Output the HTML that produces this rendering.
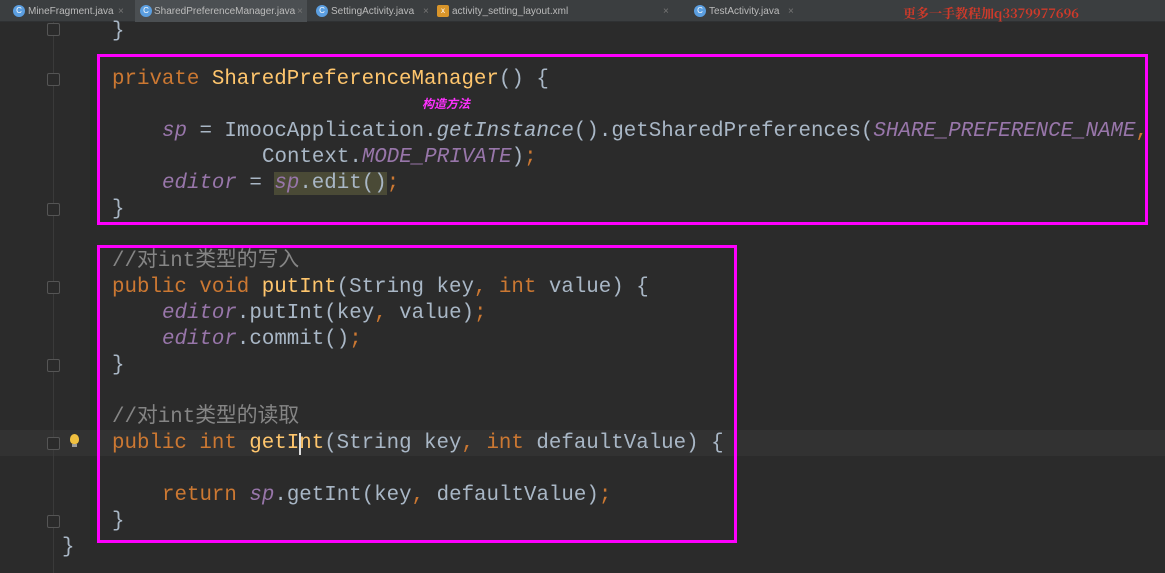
<!DOCTYPE html>
<html><head><meta charset="utf-8"><style>
*{margin:0;padding:0;box-sizing:border-box}
body{width:1165px;height:573px;overflow:hidden;background:#2b2b2b;position:relative;font-family:"Liberation Mono","Noto Sans CJK SC",monospace}
.tabs{position:absolute;left:0;top:0;width:1165px;height:22px;background:#3b3e40;border-bottom:1px solid #2f3133;font-family:"Liberation Sans",sans-serif;font-size:10px;color:#bbbbbb}
.tab{position:absolute;top:0;height:22px}
.tab.act{background:#4b4f52}
.t{position:absolute;top:1px;line-height:22px;white-space:nowrap}
.ic{position:absolute;top:5px;width:12px;height:12px;border-radius:50%;background:#5b9ee0;color:#fff;font-size:8px;line-height:12px;text-align:center;font-family:"Liberation Sans",sans-serif}
.x{position:absolute;top:1px;line-height:22px;color:#777;font-size:10px;font-family:"Liberation Sans",sans-serif}
.wm{position:absolute;left:903px;top:6px;font-family:"Noto Serif CJK SC",serif;font-size:13px;color:#d03a2a;font-weight:bold;line-height:14px}
.fl{position:absolute;left:53px;top:22px;width:1px;height:551px;background:#3a3a3a}
.fold{position:absolute;left:47px;width:13px;height:13px;border:1px solid #555;border-radius:2px;background:#2b2b2b}
.l{position:absolute;height:26px;line-height:26px;font-size:20.8px;color:#a9b7c6;white-space:pre}
.k{color:#cc7832}.m{color:#ffc66d}.p{color:#9876aa;font-style:italic}.c{color:#858585}
.box{position:absolute;border:3px solid #ff00ff}
.cur{position:absolute;left:0;top:430px;width:1165px;height:26px;background:#323232}
</style></head><body>
<div class="tabs">
<div class="tab act" style="left:135px;width:172px"></div>
<span class="ic" style="left:13px">C</span><span class="t" style="left:28px">MineFragment.java</span><span class="x" style="left:118px">×</span>
<span class="ic" style="left:140px">C</span><span class="t" style="left:154px">SharedPreferenceManager.java</span><span class="x" style="left:297px">×</span>
<span class="ic" style="left:316px">C</span><span class="t" style="left:331px">SettingActivity.java</span><span class="x" style="left:423px">×</span>
<span class="ic" style="left:437px;border-radius:2px;background:#d9952a">x</span><span class="t" style="left:452px">activity_setting_layout.xml</span><span class="x" style="left:663px">×</span>
<span class="ic" style="left:694px">C</span><span class="t" style="left:709px">TestActivity.java</span><span class="x" style="left:788px">×</span>
</div>
<div class="wm">更多一手教程加q3379977696</div>
<div class="cur"></div>
<div class="fl"></div>
<div class="fold" style="top:23px"></div>
<div class="fold" style="top:73px"></div>
<div class="fold" style="top:203px"></div>
<div class="fold" style="top:281px"></div>
<div class="fold" style="top:359px"></div>
<div class="fold" style="top:437px"></div>
<div class="fold" style="top:515px"></div>
<div style="position:absolute;left:70px;top:434px;width:9px;height:10px;border-radius:50% 50% 40% 40%;background:#f0c040"></div>
<div style="position:absolute;left:72px;top:444px;width:5px;height:3px;background:#999"></div>

<div class="l" style="left:112px;top:19px">}</div>
<div class="l" style="left:112px;top:67px"><span class="k">private </span><span class="m">SharedPreferenceManager</span>() {</div>
<div style="position:absolute;left:422px;top:95px;font-family:'Noto Sans CJK SC',sans-serif;font-style:italic;font-size:12px;color:#ff30ff;font-weight:bold">构造方法</div>
<div class="l" style="left:162px;top:119px"><span class="p">sp</span> = ImoocApplication.<span style="font-style:italic">getInstance</span>().getSharedPreferences(<span class="p">SHARE_PREFERENCE_NAME</span><span class="k">,</span></div>
<div class="l" style="left:262px;top:145px">Context.<span class="p">MODE_PRIVATE</span>)<span class="k">;</span></div>
<div class="l" style="left:162px;top:171px"><span class="p">editor</span> = <span style="background:#4a4a36"><span class="p">sp</span>.edit()</span><span class="k">;</span></div>
<div class="l" style="left:112px;top:197px">}</div>

<div class="l c" style="left:112px;top:249px">//对int类型的写入</div>
<div class="l" style="left:112px;top:275px"><span class="k">public void </span><span class="m">putInt</span>(String key<span class="k">, int </span>value) {</div>
<div class="l" style="left:162px;top:301px"><span class="p">editor</span>.putInt(key<span class="k">, </span>value)<span class="k">;</span></div>
<div class="l" style="left:162px;top:327px"><span class="p">editor</span>.commit()<span class="k">;</span></div>
<div class="l" style="left:112px;top:353px">}</div>
<div class="l c" style="left:112px;top:405px">//对int类型的读取</div>
<div class="l" style="left:112px;top:431px"><span class="k">public int </span><span class="m">getInt</span>(String key<span class="k">, int </span>defaultValue) {</div>
<div style="position:absolute;left:299px;top:433px;width:2px;height:22px;background:#ddd"></div>
<div class="l" style="left:162px;top:483px"><span class="k">return </span><span class="p">sp</span>.getInt(key<span class="k">, </span>defaultValue)<span class="k">;</span></div>
<div class="l" style="left:112px;top:509px">}</div>
<div class="l" style="left:62px;top:535px">}</div>

<div class="box" style="left:97px;top:54px;width:1051px;height:171px"></div>
<div class="box" style="left:97px;top:245px;width:640px;height:298px"></div>
</body></html>
